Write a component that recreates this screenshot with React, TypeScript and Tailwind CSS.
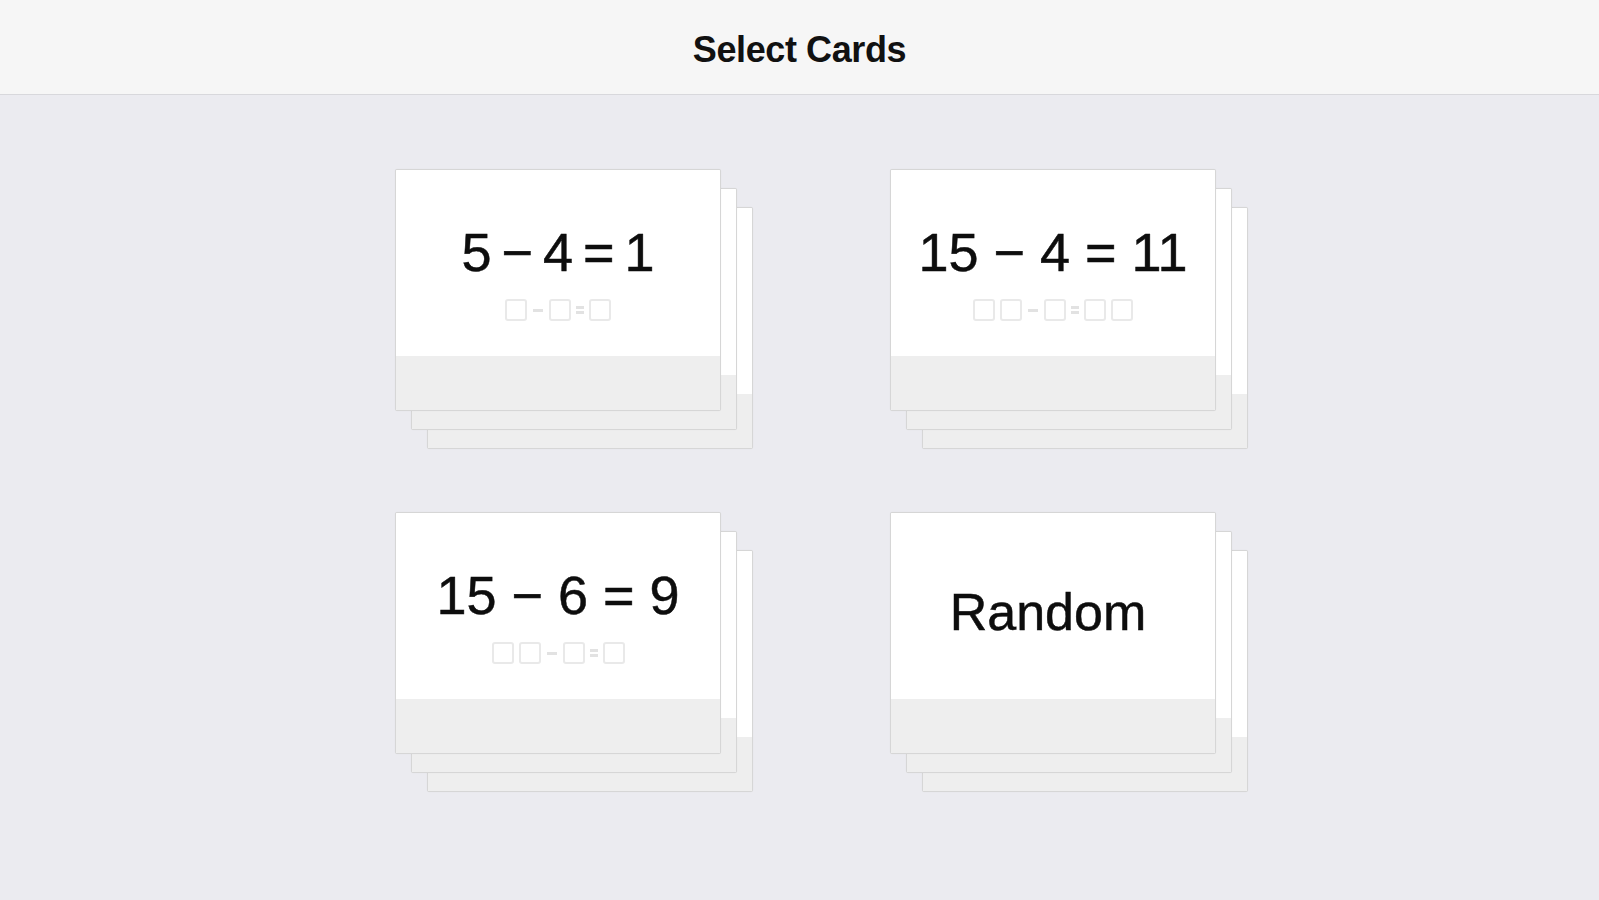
import React from 'react';

type Deck = {
  id: string;
  label: string;
  pattern?: string; // b = box, - = minus, = = equals
  tight?: boolean;
};

const decks: Deck[] = [
  { id: 'a', label: '5 − 4 = 1', pattern: 'b-b=b', tight: true },
  { id: 'b', label: '15 − 4 = 11', pattern: 'bb-b=bb' },
  { id: 'c', label: '15 − 6 = 9', pattern: 'bb-b=b' },
  { id: 'd', label: 'Random' },
];

// the little placeholder boxes under each equation
const Pattern = ({ pattern }: { pattern: string }) => (
  <div className="flex items-center justify-center gap-[5px] h-[22px] mt-[20px]">
    {pattern.split('').map((ch, i) => {
      if (ch === 'b') {
        return <span key={i} className="block w-[22px] h-[22px] border-2 border-[#e9e9e9] rounded-[3px]" />;
      }
      if (ch === '-') {
        return <span key={i} className="block w-[10px] h-[3px] bg-[#e2e2e2] mx-[1px]" />;
      }
      return (
        <span key={i} className="flex flex-col gap-[2px] w-[8px]">
          <span className="block h-[3px] bg-[#e2e2e2]" />
          <span className="block h-[3px] bg-[#e2e2e2]" />
        </span>
      );
    })}
  </div>
);

const Card = ({ deck, offset }: { deck?: Deck; offset: string }) => (
  <div className={`absolute ${offset} w-[326px] h-[242px] flex flex-col border border-[#d6d6d6] rounded-[2px] overflow-hidden bg-white shadow-[0_0_1px_rgba(0,0,0,0.08)]`}>
    <div className="h-[186px] bg-white text-center text-[#0d0d0d] [-webkit-text-stroke:0.5px_#0d0d0d]">
      {deck && deck.pattern && (
        <>
          <div className={`pt-[55px] text-[54px] leading-none ${deck.tight ? '[word-spacing:-5px]' : ''}`}>{deck.label}</div>
          <Pattern pattern={deck.pattern} />
        </>
      )}
      {deck && !deck.pattern && (
        <div className="pt-[73px] pr-[10px] text-[52px] leading-none">{deck.label}</div>
      )}
    </div>
    <div className="flex-1 bg-[#eeeeee]" />
  </div>
);

const Stack = ({ deck }: { deck: Deck }) => (
  <div className="relative w-[358px] h-[281px] cursor-pointer">
    <Card offset="left-[32px] top-[38px]" />
    <Card offset="left-[16px] top-[19px]" />
    <Card offset="left-0 top-0" deck={deck} />
  </div>
);

export default function App() {
  return (
    <div
      className="w-full min-h-[900px] bg-[#ebebf0] flex flex-col"
      style={{ fontFamily: '"Liberation Sans", Arial, sans-serif' }}
    >
      <header className="h-[95px] shrink-0 bg-[#f6f6f6] border-b border-[#d8d8dc] flex items-center justify-center pt-[6px]">
        <h1 className="text-[36px] font-bold text-[#111] tracking-[-0.4px]">Select Cards</h1>
      </header>
      <main className="grid grid-cols-[358px_358px] gap-x-[137px] gap-y-[62px] justify-center pt-[74px] pl-[44px]">
        {decks.map((d) => (
          <Stack key={d.id} deck={d} />
        ))}
      </main>
    </div>
  );
}
